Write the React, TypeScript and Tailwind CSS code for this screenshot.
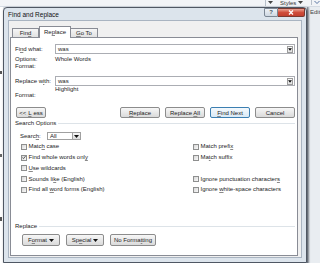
import React from "react";

function U({ children }: { children: React.ReactNode }) {
  return <span className="underline underline-offset-[1px] decoration-[#8a8a8a]">{children}</span>;
}

function Arrow({ color = "#111" }: { color?: string }) {
  return (
    <svg width="5" height="3" viewBox="0 0 5 3">
      <path d="M0 0h5L2.5 3z" fill={color} />
    </svg>
  );
}

function Button({
  children,
  className,
  focused,
}: {
  children: React.ReactNode;
  className: string;
  focused?: boolean;
}) {
  return (
    <div
      className={`${className} h-full flex items-center justify-center gap-[2px] rounded-[2px] border leading-none ${
        focused
          ? "border-[#3c7fb1] bg-linear-to-b from-[#f4f9fd] to-[#d9e9f5]"
          : "border-[#8c8c8c] bg-linear-to-b from-[#f7f7f7] to-[#dadada]"
      }`}
    >
      {children}
    </div>
  );
}

function Check({ children, checked }: { children: React.ReactNode; checked?: boolean }) {
  return (
    <div className="flex items-center gap-[1.5px] h-full whitespace-nowrap">
      <div className="w-[6px] h-[6px] border border-[#8e8f8f] bg-linear-to-br from-[#d8d8d8] to-[#f9f9f9] flex items-center justify-center">
        {checked && (
          <svg width="5" height="5" viewBox="0 0 5 5">
            <path d="M0.6 2.6 L1.9 3.9 L4.4 0.8" stroke="#2a2a2a" strokeWidth="0.9" fill="none" />
          </svg>
        )}
      </div>
      <span>{children}</span>
    </div>
  );
}

function Combo({ value }: { value: string }) {
  return (
    <div className="flex-1 h-full border border-[#abadb3] bg-white flex items-center pl-[2px] pr-[1px]">
      <span className="flex-1">{value}</span>
      <div className="w-[6px] h-[7px] border border-[#9c9c9c] bg-linear-to-b from-[#fafafa] to-[#e2e2e2] flex items-center justify-center">
        <Arrow />
      </div>
    </div>
  );
}

export default function App() {
  return (
    <div className="relative w-[320px] h-[263px] overflow-hidden bg-[#e4e8ed] font-['Liberation_Sans',Arial,sans-serif] text-[6px] text-[#1c1c1c]">
      {/* Word window behind the dialog */}
      <div className="absolute left-0 top-0 w-[320px] h-[7px] bg-[#f2f4f7] border-b border-[#d5dbe3] flex items-start">
        <div className="ml-[265px] mt-[-1px] h-[7px] flex items-center gap-[2px] text-[#333] leading-none">
          <div className="w-px h-[6px] bg-[#b8c0ca]" />
          <Arrow color="#444" />
          <span className="ml-[5px]">Styles</span>
          <Arrow color="#444" />
          <div className="ml-[6px] w-px h-[5px] bg-[#b8c0ca]" />
          <svg width="6" height="5" viewBox="0 0 6 5">
            <path d="M0.5 1 L3 3.5 M3 3.5 L5.5 1" stroke="#4a6a9a" strokeWidth="0.9" fill="none" />
          </svg>
        </div>
      </div>
      <div className="absolute left-[307px] top-[7px] w-[13px] h-[256px] bg-[#e9edf1] flex">
        <div className="w-[3px] h-full bg-linear-to-r from-[#7d8794] to-[#e9edf1]" />
        <div className="w-[10px] pt-[2px] text-[#444] overflow-hidden whitespace-nowrap leading-none">Editi</div>
      </div>
      <div className="absolute left-0 top-[7px] w-[3px] h-[256px] bg-white">
        <div className="mt-[64px] w-[2px] h-[3px] bg-[#555]" />
        <div className="mt-[80px] w-[2px] h-[3px] bg-[#666]" />
        <div className="mt-[60px] w-[2px] h-[4px] bg-[#555]" />
      </div>

      {/* Dialog window */}
      <div className="absolute left-[3px] top-[7px] w-[304px] h-[256px] flex flex-col rounded-t-[4px] border border-[#4f5763] bg-[#dce4ec] px-[4px] pb-[4px] shadow-[1px_1px_3px_rgba(0,0,0,0.4)]">
        <div className="h-[12px] pt-[1px] flex items-center text-[6.5px] text-[#111]">Find and Replace</div>
        <div className="absolute right-[1px] top-0 flex h-[9px]">
          <div className="w-[14px] h-full border border-[#7c8794] rounded-bl-[2px] bg-linear-to-b from-[#eef2f6] to-[#cfd8e2] flex items-center justify-center text-[6px] font-bold text-[#4a5564]">
            ?
          </div>
          <div className="w-[27px] h-full border border-l-0 border-[#7a3a32] rounded-br-[2px] bg-linear-to-b from-[#e8a092] via-[#cf4d3b] to-[#c2402f] flex items-center justify-center">
            <svg width="6" height="5" viewBox="0 0 6 5">
              <path d="M1 0.5 L5 4.5 M5 0.5 L1 4.5" stroke="white" strokeWidth="1.3" />
            </svg>
          </div>
        </div>

        <div className="flex-1 flex flex-col bg-[#f0f0f0] border border-[#a9b4c1] pl-[1px] pr-[3px] pb-[1px]">
          {/* Tabs */}
          <div className="h-[16px] flex items-end pl-[2px]">
            <div className="w-[27px] h-[9px] border border-b-0 border-[#898c95] bg-linear-to-b from-[#f6f6f6] to-[#e1e1e1] flex items-center justify-center">
              Fin<U>d</U>
            </div>
            <div className="relative z-10 -mb-px w-[32px] h-[12px] border border-b-0 border-[#898c95] bg-white flex items-center justify-center">
              Re<U>p</U>lace
            </div>
            <div className="w-[27px] h-[9px] border border-b-0 border-l-0 border-[#898c95] bg-linear-to-b from-[#f6f6f6] to-[#e1e1e1] flex items-center justify-center">
              <U>G</U>o To
            </div>
          </div>

          {/* Tab page */}
          <div className="flex-1 flex flex-col bg-white border border-[#898c95] pl-[4px] pr-[2px] pb-[9px]">
            <div className="mt-[6px] h-[10px] flex items-center">
              <div className="w-[40px]">
                Fi<U>n</U>d what:
              </div>
              <Combo value="was" />
            </div>
            <div className="mt-[2px] h-[7px] flex items-center">
              <div className="w-[40px]">Options:</div>
              <span>Whole Words</span>
            </div>
            <div className="h-[7px] flex items-center">Format:</div>

            <div className="mt-[6px] h-[10px] flex items-center">
              <div className="w-[40px]">
                Replace w<U>i</U>th:
              </div>
              <Combo value="was" />
            </div>
            <div className="h-[6px] flex items-center pl-[40px]">Highlight</div>
            <div className="h-[7px] flex items-center">Format:</div>

            <div className="mt-[8px] h-[11px] flex justify-between">
              <Button className="ml-[1px] w-[30px]">
                &lt;&lt; <U>L</U>ess
              </Button>
              <div className="flex gap-[5px]">
                <Button className="w-[40px]">
                  <span>
                    <U>R</U>eplace
                  </span>
                </Button>
                <Button className="w-[40px]">
                  <span>
                    Replace <U>A</U>ll
                  </span>
                </Button>
                <Button className="w-[40px]" focused>
                  <span>
                    <U>F</U>ind Next
                  </span>
                </Button>
                <Button className="w-[40px]">Cancel</Button>
              </div>
            </div>

            <div className="mt-[2px] h-[7px] flex items-center gap-[2px]">
              <span>Search Options</span>
              <div className="flex-1 h-px bg-[#dde3e8]" />
            </div>

            <div className="mt-[5px] h-[8px] flex items-center pl-[5px]">
              <div className="w-[27px]">
                Searc<U>h</U>:
              </div>
              <div className="w-[34px] h-full border border-[#a0a0a0] flex items-center">
                <span className="flex-1 pl-[2px]">All</span>
                <div className="w-[8px] h-full border-l border-[#a0a0a0] bg-linear-to-b from-[#f7f7f7] to-[#dcdcdc] flex items-center justify-center">
                  <Arrow />
                </div>
              </div>
            </div>

            <div className="mt-[1.5px] grid grid-cols-[172px_1fr] grid-rows-[repeat(5,10.75px)] pl-[6px]">
              <Check>
                Matc<U>h</U> case
              </Check>
              <Check>
                Match prefi<U>x</U>
              </Check>
              <Check checked>
                Find whole words onl<U>y</U>
              </Check>
              <Check>
                Ma<U>t</U>ch suffix
              </Check>
              <Check>
                <U>U</U>se wildcards
              </Check>
              <div />
              <Check>
                Sounds li<U>k</U>e (English)
              </Check>
              <Check>
                Ignore punctuation character<U>s</U>
              </Check>
              <Check>
                Find all <U>w</U>ord forms (English)
              </Check>
              <Check>
                Ignore <U>w</U>hite-space characters
              </Check>
            </div>

            <div className="flex-1" />

            <div className="h-[7px] flex items-center gap-[2px]">
              <span>Replace</span>
              <div className="flex-1 h-px bg-[#dde3e8]" />
            </div>
            <div className="mt-[4px] h-[12px] flex gap-[6px] pl-[7px]">
              <Button className="w-[38px]">
                <span>
                  F<U>o</U>rmat
                </span>
                <Arrow />
              </Button>
              <Button className="w-[38px]">
                <span>
                  Sp<U>e</U>cial
                </span>
                <Arrow />
              </Button>
              <Button className="w-[46px]">
                <span>
                  No Forma<U>t</U>ting
                </span>
              </Button>
            </div>
          </div>
        </div>
      </div>
    </div>
  );
}
